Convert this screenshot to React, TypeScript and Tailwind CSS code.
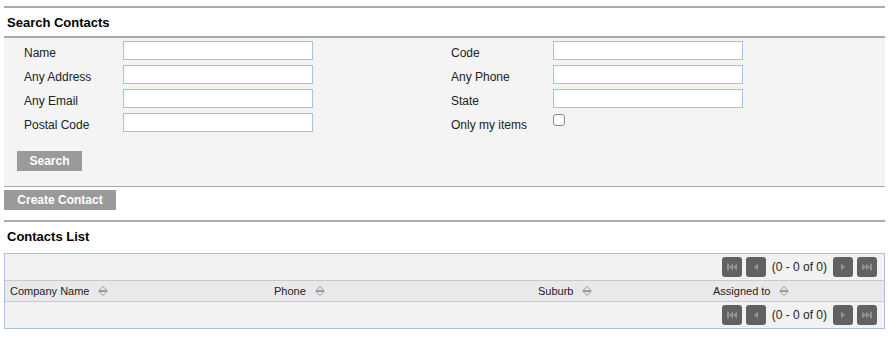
import React from "react";

const font = { fontFamily: '"Liberation Sans", Arial, sans-serif' };

function Field({ label, w }: { label: string; w: string }) {
  return (
    <div className="flex h-[19px] items-center">
      <div className={`${w} pt-[5px] text-[12px] text-[#222]`}>{label}</div>
      <div className="h-[19px] w-[190px] border border-[#a4c2e4] bg-white" />
    </div>
  );
}

function SortIcon() {
  return (
    <svg width="10" height="12" viewBox="0 0 10 12" className="ml-[9px]">
      <path d="M1 5.5 L5 1.5 L9 5.5 Z" fill="none" stroke="#9a9a9a" strokeWidth="1" />
      <path d="M1 6.5 L5 10.5 L9 6.5 Z" fill="none" stroke="#9a9a9a" strokeWidth="1" />
    </svg>
  );
}

function PagerButton({ kind }: { kind: "first" | "prev" | "next" | "last" }) {
  const c = "#939393";
  let icon: React.ReactNode = null;
  if (kind === "first")
    icon = (
      <svg width="10" height="8" viewBox="0 0 10 8">
        <rect x="0" y="0.5" width="2" height="7" fill={c} />
        <path d="M6 0.5 L2 4 L6 7.5 Z" fill={c} />
        <path d="M10 0.5 L6 4 L10 7.5 Z" fill={c} />
      </svg>
    );
  if (kind === "prev")
    icon = (
      <svg width="6" height="8" viewBox="0 0 6 8">
        <path d="M5 0.5 L1 4 L5 7.5 Z" fill={c} />
      </svg>
    );
  if (kind === "next")
    icon = (
      <svg width="6" height="8" viewBox="0 0 6 8">
        <path d="M1 0.5 L5 4 L1 7.5 Z" fill={c} />
      </svg>
    );
  if (kind === "last")
    icon = (
      <svg width="10" height="8" viewBox="0 0 10 8">
        <path d="M0 0.5 L4 4 L0 7.5 Z" fill={c} />
        <path d="M4 0.5 L8 4 L4 7.5 Z" fill={c} />
        <rect x="8" y="0.5" width="2" height="7" fill={c} />
      </svg>
    );
  return (
    <div className="flex h-[20px] w-[20px] items-center justify-center rounded-[3px] bg-[#616161]">
      {icon}
    </div>
  );
}

function Pager() {
  return (
    <div className="flex h-[26px] items-center justify-end pr-[7px]">
      <div className="flex items-center gap-[4px]">
        <PagerButton kind="first" />
        <PagerButton kind="prev" />
      </div>
      <div className="mx-[6px] text-[12px] text-[#222]">(0 - 0 of 0)</div>
      <div className="flex items-center gap-[4px]">
        <PagerButton kind="next" />
        <PagerButton kind="last" />
      </div>
    </div>
  );
}

export default function App() {
  return (
    <div className="min-h-[345px] bg-white px-[4px] pt-[6px]" style={font}>
      <div className="border-t-2 border-[#aaaaaa]">
        <div className="flex h-[28px] items-center pl-[3px] pt-[2px] text-[13px] font-bold text-black">
          Search Contacts
        </div>
      </div>
      <div className="border-t-2 border-b border-[#aaaaaa] bg-[#f4f4f4] pb-[15px] pt-[3px]">
        <div className="flex pl-[20px]">
          <div className="flex w-[427px] flex-col gap-[5px]">
            <Field label="Name" w="w-[99px]" />
            <Field label="Any Address" w="w-[99px]" />
            <Field label="Any Email" w="w-[99px]" />
            <Field label="Postal Code" w="w-[99px]" />
          </div>
          <div className="flex flex-col gap-[5px]">
            <Field label="Code" w="w-[102px]" />
            <Field label="Any Phone" w="w-[102px]" />
            <Field label="State" w="w-[102px]" />
            <div className="flex h-[19px] items-center">
              <div className="w-[102px] pt-[5px] text-[12px] text-[#222]">Only my items</div>
              <div className="mb-[6px] h-[12px] w-[12px] rounded-[3px] border border-[#8a8a8a] bg-white" />
            </div>
          </div>
        </div>
        <div className="ml-[13px] mt-[19px] flex h-[20px] w-[65px] items-center justify-center bg-[#9a9a9a] text-[12px] font-bold text-white">
          Search
        </div>
      </div>
      <div className="mb-[10px] mt-[3px] flex h-[20px] w-[112px] items-center justify-center bg-[#9a9a9a] text-[12px] font-bold text-white">
        Create Contact
      </div>
      <div className="border-t-2 border-[#aaaaaa]">
        <div className="flex h-[28px] items-center pl-[3px] pt-[2px] text-[13px] font-bold text-black">
          Contacts List
        </div>
      </div>
      <div className="mt-[3px] border border-[#a9c3dc] bg-[#f2f2f2]">
        <Pager />
        <div className="grid h-[22px] grid-cols-[264px_264px_175px_175px] items-center border-y border-[#c9c9c9] bg-[#e9e9eb] text-[11px] text-[#222]">
          {["Company Name", "Phone", "Suburb", "Assigned to"].map((h) => (
            <div key={h} className="flex items-center pl-[5px]">
              <span>{h}</span>
              <SortIcon />
            </div>
          ))}
        </div>
        <Pager />
      </div>
    </div>
  );
}
